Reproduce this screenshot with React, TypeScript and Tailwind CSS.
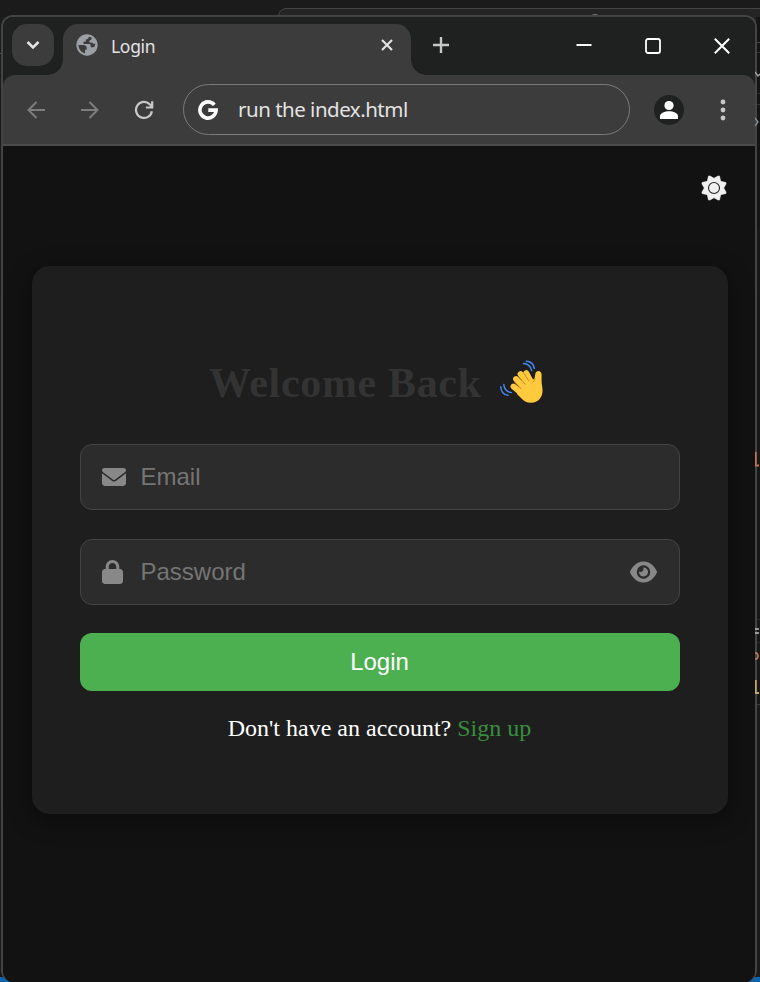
import React from "react";
import { FaEnvelope, FaEye, FaLock } from "react-icons/fa6";

function Globe() {
  return (
    <svg viewBox="0 0 24 24" className="size-[22px]">
      <circle cx="12" cy="12" r="11.6" fill="#9aa0a6" />
      <g fill="#3c3c3c">
        <path d="M2.700 12h5.100c2.300 0 3.900 1.300 3.900 3.400v1.900h-1.900v3.900C5.800 20.300 2.800 16.700 2.700 12z" />
        <path d="M14 2.900c-.2 1.900-1.200 2.900-3.100 2.900v2.300H8.300v2.700h6.200c.9 0 1.500.6 1.500 1.600v2h2.700c1 0 1.700-.7 1.900-1.600l.6-2.100h-2.400l-1.400-1.500h-2.900V7.500l2.500-1.900V3.700z" />
      </g>
    </svg>
  );
}

function Sun() {
  return (
    <svg viewBox="0 0 26 26" className="mr-[-1px] size-[26px] self-end">
      <path
        d="M13 3.300L17 1h1.500l1.200 5.300L25 7.500V9L22.700 13 25 17v1.500l-5.300 1.200L18.500 25H17L13 22.700 9 25H7.500L6.300 19.700 1 18.500V17L3.300 13 1 9V7.500L6.300 6.300 7.500 1H9z"
        fill="#f1f1f1" stroke="#f1f1f1" strokeWidth=".6" strokeLinejoin="round"
      />
      <circle cx="13" cy="13" r="5.500" fill="none" stroke="#222" strokeWidth="1.100" />
    </svg>
  );
}

function Hand() {
  return (
    <svg viewBox="0 0 48 48" className="size-12 shrink-0" fill="none" strokeLinecap="round">
      <path stroke="#ffca3d" strokeWidth="5.800" d="M15.500 27.500l10 8.500M18 20l11 12M22.500 15l10 14M28.300 14l7 13" />
      <path fill="#ffca3d" d="M19 35l4-13 10 0 3.500-2.500.8-4.500c.8-4.200 6.300-3.700 6.300.8 0 4-.2 7.500.7 12.700C45.800 37 41 43.800 33 43.800c-4.500 0-7.500-2-10.500-5.300z" />
      <g stroke="#d4861c" strokeWidth="1">
        <path d="M17 23.500l6 6.200M21 18l6 7M26 14.500l5 7.500M37 19.500c-.6 1.500-1.200 2.600-2.200 3.700" />
      </g>
      <g stroke="#4489ec" strokeWidth="1.500">
        <path d="M25.500 4.600c4 .2 7 2.800 8.200 7M28.300 2.300c4.500.2 7.300 3 8 7M5.800 25.500c.2 4.200 3.200 7.800 7.500 8M2.700 27.800c.2 4.700 3.200 8.300 7.300 8.400" />
      </g>
    </svg>
  );
}

function TabStrip() {
  return (
    <div className="flex h-[58px] shrink-0 items-start bg-[#1f2120] pl-[9px] pt-[7px]">
      <button className="flex size-[42px] items-center justify-center rounded-[15px] bg-[#3c3c3c]">
        <svg viewBox="0 0 14 10" className="h-[10px] w-[14px]" fill="none" stroke="#e3e3e3" strokeWidth="2.500"><path d="M1.500 2L7 7.500 12.500 2" /></svg>
      </button>
      <div className="relative ml-[9px] flex h-[51px] w-[348px] items-start rounded-t-[15px] bg-[#3c3c3c] pl-[13px] pt-[10px]">
        <span className="absolute -left-[15px] bottom-0 size-[15px] bg-[radial-gradient(circle_at_0_0,transparent_14.5px,#3c3c3c_15px)]" />
        <span className="absolute -right-[15px] bottom-0 size-[15px] bg-[radial-gradient(circle_at_100%_0,transparent_14.5px,#3c3c3c_15px)]" />
        <Globe />
        <span className="ml-[13px] font-['Noto_Sans',sans-serif] text-[17.500px] leading-[25px] tracking-[-0.3px] text-[#e3e3e3]">Login</span>
        <svg viewBox="0 0 12 12" className="ml-auto mr-[18px] mt-[5px] size-3" fill="none" stroke="#e3e3e3" strokeWidth="2.200"><path d="M1 1l10 10M11 1L1 11" /></svg>
      </div>
      <svg viewBox="0 0 16 16" className="ml-[22px] mt-[13px] size-4" fill="none" stroke="#c7c7c7" strokeWidth="2.400"><path d="M8 0v16M0 8h16" /></svg>
      <div className="ml-auto mr-[25.500px] mt-[14px] flex gap-[53px]">
        <svg viewBox="0 0 16 16" className="size-4" stroke="#fff" strokeWidth="2"><path d="M.5 7h15" /></svg>
        <svg viewBox="0 0 16 16" className="size-4" fill="none" stroke="#fff" strokeWidth="1.800"><rect x="1" y="1" width="14" height="14" rx="2" /></svg>
        <svg viewBox="0 0 16 16" className="size-4" stroke="#fff" strokeWidth="2"><path d="M.8.8l14.400 14.400M15.200.8L.8 15.200" /></svg>
      </div>
    </div>
  );
}

function Toolbar() {
  return (
    <div className="bg-[#1f2120]">
      <div className="flex h-[71px] items-center rounded-t-[12px] border-b-2 border-[#4a4a4a] bg-[#3c3c3c] pl-6">
        <svg viewBox="0 0 18 18" className="size-[18px]" fill="none" stroke="#7d7d7d" strokeWidth="2"><path d="M18 9H1.500M9.500 1L1.500 9l8 8" /></svg>
        <svg viewBox="0 0 18 18" className="ml-9 size-[18px]" fill="none" stroke="#7d7d7d" strokeWidth="2"><path d="M0 9h16.500M8.500 1l8 8-8 8" /></svg>
        <svg viewBox="0 0 18 18" className="ml-9 size-[18px] overflow-visible" fill="none" stroke="#c7c7c7" strokeWidth="2.200"><path d="M16.900 10.200A8 8 0 1 1 14.700 3.300L17 5.700M17.200.3v6.200h-6.300" /></svg>
        <div className="ml-[30px] flex h-[51px] w-[447px] items-center rounded-full border-[1.500px] border-[#7b7b7b] pl-[14px]">
          <svg viewBox="0 0 20 20" className="size-5" fill="none" stroke="#fff" strokeWidth="3.600"><path d="M16.300 4.900A8.100 8.100 0 1 0 18.100 10.100H10.300" /></svg>
          <span className="mb-0.5 ml-5 font-['Noto_Sans',sans-serif] text-[20.500px] leading-7 tracking-[-0.5px] text-[#e3e3e3]">run the index.html</span>
        </div>
        <div className="ml-6 flex size-[30px] items-center justify-center rounded-full bg-[#1f2120]">
          <svg viewBox="0 0 18 18" className="size-[18px]" fill="#fff"><circle cx="9" cy="4.500" r="4.600" /><path d="M0 18v-3c0-3 5-4.700 9-4.700s9 1.700 9 4.700v3z" /></svg>
        </div>
        <svg viewBox="0 0 6 22" className="ml-9 h-[22px] w-[6px]" fill="#c7c7c7"><circle cx="3" cy="3" r="2.400" /><circle cx="3" cy="11" r="2.400" /><circle cx="3" cy="19" r="2.400" /></svg>
      </div>
    </div>
  );
}

function LoginPage() {
  return (
    <div className="flex flex-1 flex-col bg-[#121212] px-[29px] pt-[29px]">
      <Sun />
      <div className="mt-[65px] flex h-[548px] w-[696px] flex-col rounded-[18px] bg-[#1e1e1e] px-12 shadow-[0_6px_24px_rgba(0,0,0,0.4)]">
        <h1 className="mt-[91px] flex h-[52px] items-center pl-[129px] font-['Liberation_Serif',serif] text-[42px] font-bold tracking-[0.65px] text-[#333]">
          <span className="whitespace-nowrap">Welcome Back</span>
          <span className="ml-[16px]"><Hand /></span>
        </h1>
        <div className="mt-[35px] flex h-[66px] shrink-0 items-center rounded-[12px] border border-[#444] bg-[#2c2c2c] px-[21px] text-[#888]">
          <FaEnvelope className="size-6" />
          <span className="ml-[14.500px] font-['Liberation_Sans',sans-serif] text-2xl text-[#757575]">Email</span>
        </div>
        <div className="mt-[29px] flex h-[66px] shrink-0 items-center rounded-[12px] border border-[#444] bg-[#2c2c2c] pl-[21px] pr-[22px] text-[#888]">
          <FaLock className="h-6 w-[21px]" />
          <span className="ml-[17.500px] font-['Liberation_Sans',sans-serif] text-2xl text-[#757575]">Password</span>
          <FaEye className="ml-auto h-6 w-[27px]" />
        </div>
        <button className="mt-7 h-[58px] shrink-0 rounded-[12px] bg-[#4caf50] pr-px font-['Liberation_Sans',sans-serif] text-2xl text-white">Login</button>
        <p className="mt-[23px] pr-px text-center font-['Liberation_Serif',serif] text-2xl leading-7 text-white">
          Don&apos;t have an account? <a className="text-[#388e3c]">Sign up</a>
        </p>
      </div>
    </div>
  );
}

export default function App() {
  return (
    <div className="relative h-[982px] w-[760px] overflow-hidden bg-[#1b1b1b]">
      <div className="absolute left-[278px] top-2 h-5 w-[500px] rounded-tl-lg border border-[#444] bg-[#242424]" />
      <div className="absolute left-[589px] top-[14px] size-3 rounded-full border border-[#777]" />
      <div className="absolute right-0 top-[17px] h-[210px] w-1 bg-[#151515]" />
      <div className="absolute right-0 top-[227px] h-[478px] w-1 bg-[#181818]" />
      <div className="absolute left-0 top-[53px] h-px w-1 bg-[#24608c]" />
      <div className="absolute bottom-0 left-0 h-[5px] w-full bg-[#0e65ad]" />
      <div className="absolute left-[756px] top-[42px] h-px w-1 bg-[#444]" />
      <div className="absolute left-[756px] top-[52px] h-px w-1 bg-[#333]" />
      <div className="absolute left-[756px] top-[93px] h-3 w-1 border-y border-[#303030]" />
      <div className="absolute left-[756px] top-[619px] h-6 w-1 border-y border-[#282828]" />
      <div className="absolute left-[756px] top-[704px] h-px w-1 bg-[#383838]" />
      <div className="relative ml-px flex h-[982px] w-[756px] flex-col pt-[15px]">
        <div className="flex flex-1 flex-col overflow-hidden rounded-[12px] border-x-2 border-t-2 border-[#444] bg-[#121212]">
          <TabStrip />
          <Toolbar />
          <LoginPage />
        </div>
      </div>
      <svg className="absolute right-0 top-0 h-[982px] w-[5px]" viewBox="0 0 5 982" fill="none">
        <path d="M0 72l3 4 2-2" stroke="#aaa" strokeWidth="1.300" />
        <path d="M0 118l3 4-3 4" stroke="#8794a4" strokeWidth="1.300" />
        <path d="M.8 452v13.500H4" stroke="#c07350" strokeWidth="1.800" />
        <path d="M0 629h4M0 633h4" stroke="#bbb" strokeWidth="1.700" />
        <path d="M0 653c4-1 4 7 0 6" stroke="#c07350" strokeWidth="1.700" />
        <path d="M.8 680v13H4" stroke="#c5a56d" strokeWidth="1.800" />
      </svg>
    </div>
  );
}
